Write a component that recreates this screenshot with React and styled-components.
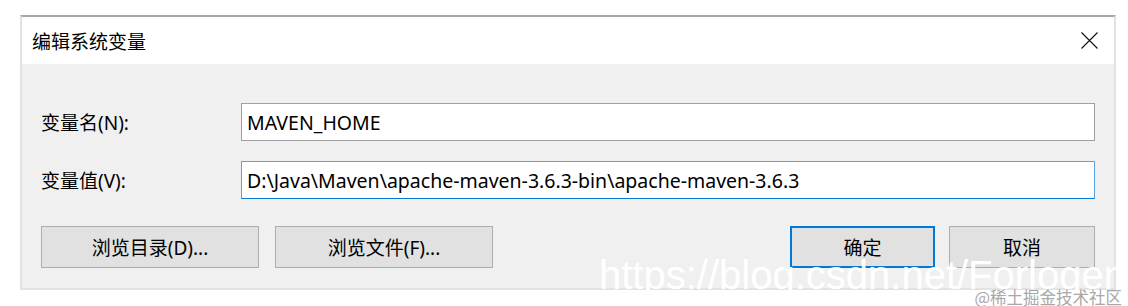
import React from "react";
import styled, { createGlobalStyle } from "styled-components";

const GlobalStyle = createGlobalStyle`
  body {
    margin: 0;
    background: #ffffff;
    font-family: "Noto Sans", "Noto Sans CJK SC", sans-serif;
    color: #000;
  }
`;

const Page = styled.div`
  position: relative;
  width: 1128px;
  height: 306px;
  padding: 15px 0 0 20px;
  box-sizing: border-box;
  overflow: hidden;
`;

const Dialog = styled.div`
  width: 1096px;
  height: 275px;
  box-sizing: border-box;
  border: 2px solid #e3e3e3;
  border-top: 2px solid #a6a6a6;
  display: flex;
  flex-direction: column;
`;

const TitleBar = styled.div`
  height: 47px;
  background: #fff;
  display: flex;
  align-items: center;
  justify-content: space-between;
  padding: 0 16px 0 10px;
`;

const Title = styled.span`
  font-size: 19px;
  font-family: "Noto Sans CJK SC", sans-serif;
`;

const Body = styled.div`
  flex: 1;
  background: #f0f0f0;
  padding: 39px 19px 0 19px;
`;

const FieldRow = styled.div`
  display: grid;
  grid-template-columns: 200px 1fr;
  align-items: center;
  margin-bottom: ${(p) => (p.last ? "0" : "20px")};
`;

const Label = styled.label`
  font-size: 19px;
  font-family: "Noto Sans", "Noto Sans CJK SC", sans-serif;
`;

const Input = styled.input`
  height: 38px;
  box-sizing: border-box;
  margin: 0;
  padding: 0 5px;
  font-family: "Noto Sans", "Noto Sans CJK SC", sans-serif;
  font-size: 19.5px;
  color: #000;
  background: #fff;
  outline: none;
  border: 1px solid ${(p) => (p.focused ? "#5aa3e3" : "#a0a0a0")};
  border-bottom-color: ${(p) => (p.focused ? "#0078d7" : "#a0a0a0")};
`;

const ButtonRow = styled.div`
  display: flex;
  align-items: center;
  margin-top: 27px;
`;

const Button = styled.button`
  width: ${(p) => p.w}px;
  height: 42px;
  box-sizing: border-box;
  margin: 0 ${(p) => p.gap || 0}px 0 0;
  padding: 0;
  background: #e1e1e1;
  border: ${(p) => (p.primary ? "2px solid #0078d7" : "1px solid #adadad")};
  font-family: "Noto Sans", "Noto Sans CJK SC", sans-serif;
  font-size: 19px;
  color: #000;
`;

const Spacer = styled.div`
  flex: 1;
`;

const Watermark = styled.div`
  position: absolute;
  left: 599px;
  top: 252px;
  font-family: "Liberation Sans", Arial, sans-serif;
  font-size: 40px;
  line-height: 46px;
  color: #fff;
  white-space: nowrap;
  pointer-events: none;
`;

const Credit = styled.div`
  position: absolute;
  right: 6px;
  top: 289px;
  font-family: "Noto Sans CJK SC", sans-serif;
  font-size: 16.5px;
  line-height: 16px;
  color: #a8a8a8;
  white-space: nowrap;
`;

function CloseIcon() {
  return (
    <svg width="17" height="17" viewBox="0 0 17 17">
      <path d="M0.5 0.5 L16.5 16.5 M16.5 0.5 L0.5 16.5" stroke="#111" strokeWidth="1.1" fill="none" />
    </svg>
  );
}

export default function App() {
  return (
    <>
      <GlobalStyle />
      <Page>
        <Dialog>
          <TitleBar>
            <Title>编辑系统变量</Title>
            <CloseIcon />
          </TitleBar>
          <Body>
            <FieldRow>
              <Label>变量名(N):</Label>
              <Input readOnly defaultValue="MAVEN_HOME" />
            </FieldRow>
            <FieldRow last>
              <Label>变量值(V):</Label>
              <Input
                focused
                readOnly
                defaultValue="D:\Java\Maven\apache-maven-3.6.3-bin\apache-maven-3.6.3"
              />
            </FieldRow>
            <ButtonRow>
              <Button w={218} gap={16}>浏览目录(D)...</Button>
              <Button w={218}>浏览文件(F)...</Button>
              <Spacer />
              <Button w={145} gap={14} primary>确定</Button>
              <Button w={146}>取消</Button>
            </ButtonRow>
          </Body>
        </Dialog>
        <Watermark>https://blog.csdn.net/Forlogen</Watermark>
        <Credit>@稀土掘金技术社区</Credit>
      </Page>
    </>
  );
}
